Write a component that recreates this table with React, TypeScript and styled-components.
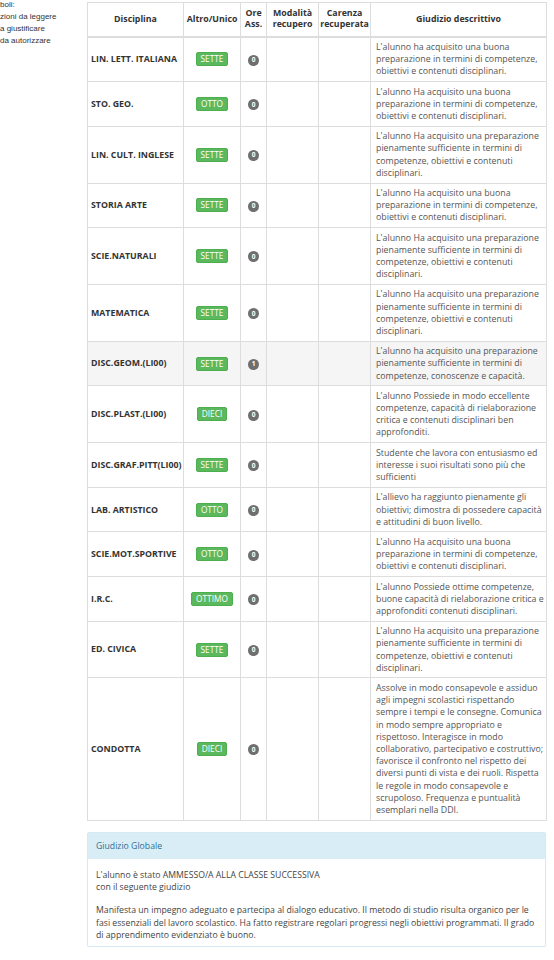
import styled, { createGlobalStyle } from 'styled-components'

interface RowProps {
    hovered?: boolean;
}

interface ColProps {
    w: number;
}

interface Voto {
    materia: string;
    voto: string;
    assenze: number;
    giudizio: string;
    hovered?: boolean;
}

const GlobalStyle = createGlobalStyle`
    *, *::before, *::after {
        box-sizing: border-box;
    }
    html, body {
        margin: 0;
        padding: 0;
        background: #fff;
    }
    body {
        font-family: "Open Sans", "DejaVu Sans", sans-serif;
        color: #333;
    }
`;

const Page = styled.div`
    display: flex;
    flex-direction: row;
    align-items: flex-start;
    width: 554px;
    padding-top: 2px;
`;

const Sidebar = styled.div`
    width: 87px;
    flex-shrink: 0;
    margin-top: -3px;
    font-family: "Liberation Sans", Arial, sans-serif;
    font-size: 8px;
    line-height: 12px;
    color: #333;
    white-space: nowrap;
    overflow: hidden;
`;

const Main = styled.div`
    width: 460px;
    display: flex;
    flex-direction: column;
    gap: 11px;
`;

const Table = styled.table`
    width: 459px;
    border-collapse: collapse;
    table-layout: fixed;
    border: 1px solid #ddd;
    font-size: 8.8px;
    line-height: 12.2px;
`;

const HeadCell = styled.th<ColProps>`
    width: ${props => props.w}px;
    padding: 3px 0;
    height: 34px;
    font-weight: 700;
    color: #333;
    text-align: center;
    vertical-align: middle;
    border: 1px solid #ddd;
    border-bottom: 2px solid #ddd;
    line-height: 11.5px;
`;

const Row = styled.tr<RowProps>`
    background: ${props => props.hovered ? '#f5f5f5' : '#fff'};
`;

const Cell = styled.td`
    border: 1px solid #ddd;
    padding: 3.5px 4px;
    vertical-align: middle;
`;

const SubjectCell = styled(Cell)`
    font-weight: 700;
    color: #333;
    white-space: nowrap;
    padding-left: 3px;
`;

const CenterCell = styled(Cell)`
    text-align: center;
    padding: 3px 0;
`;

const TextCell = styled(Cell)`
    color: #555;
    padding: 3.5px 2px 3.5px 5px;
`;

const Grade = styled.span`
    display: inline-block;
    background: #5cb85c;
    border: 1px solid #4cae4c;
    border-radius: 2px;
    color: #fff;
    font-size: 8.3px;
    line-height: 12px;
    padding: 0 4px;
    text-transform: uppercase;
`;

const Hours = styled.span`
    display: inline-flex;
    align-items: center;
    justify-content: center;
    width: 11px;
    height: 11px;
    border-radius: 50%;
    background: #6f6f6f;
    color: #fff;
    font-size: 6.5px;
    font-weight: 700;
`;

const Panel = styled.div`
    width: 459px;
    border: 1px solid #d5e9f3;
    border-radius: 2px;
    box-shadow: 0 1px 1px rgba(0, 0, 0, 0.05);
    font-size: 8.7px;
    line-height: 12.3px;
`;

const PanelHeading = styled.div`
    background: #d9edf7;
    color: #31708f;
    padding: 7px 8px;
    height: 26px;
`;

const PanelBody = styled.div`
    padding: 10px 6px 5px 8px;
    color: #444;

    & p {
        margin: 0 0 11px;
    }
    & p:last-child {
        margin: 0;
    }
`;

const voti: Voto[] = [
    { materia: 'LIN. LETT. ITALIANA', voto: 'Sette', assenze: 0, giudizio: "L'alunno ha acquisito una buona preparazione in termini di competenze, obiettivi e contenuti disciplinari." },
    { materia: 'STO. GEO.', voto: 'Otto', assenze: 0, giudizio: "L'alunno Ha acquisito una buona preparazione in termini di competenze, obiettivi e contenuti disciplinari." },
    { materia: 'LIN. CULT. INGLESE', voto: 'Sette', assenze: 0, giudizio: "L'alunno Ha acquisito una preparazione pienamente sufficiente in termini di competenze, obiettivi e contenuti disciplinari." },
    { materia: 'STORIA ARTE', voto: 'Sette', assenze: 0, giudizio: "L'alunno Ha acquisito una buona preparazione in termini di competenze, obiettivi e contenuti disciplinari." },
    { materia: 'SCIE.NATURALI', voto: 'Sette', assenze: 0, giudizio: "L'alunno Ha acquisito una preparazione pienamente sufficiente in termini di competenze, obiettivi e contenuti disciplinari." },
    { materia: 'MATEMATICA', voto: 'Sette', assenze: 0, giudizio: "L'alunno Ha acquisito una preparazione pienamente sufficiente in termini di competenze, obiettivi e contenuti disciplinari." },
    { materia: 'DISC.GEOM.(LI00)', voto: 'Sette', assenze: 1, hovered: true, giudizio: "L'alunno ha acquisito una preparazione pienamente sufficiente in termini di competenze, conoscenze e capacità." },
    { materia: 'DISC.PLAST.(LI00)', voto: 'Dieci', assenze: 0, giudizio: "L'alunno Possiede in modo eccellente competenze, capacità di rielaborazione critica e contenuti disciplinari ben approfonditi." },
    { materia: 'DISC.GRAF.PITT(LI00)', voto: 'Sette', assenze: 0, giudizio: 'Studente che lavora con entusiasmo ed interesse i suoi risultati sono più che sufficienti' },
    { materia: 'LAB. ARTISTICO', voto: 'Otto', assenze: 0, giudizio: "L'allievo ha raggiunto pienamente gli obiettivi; dimostra di possedere capacità e attitudini di buon livello." },
    { materia: 'SCIE.MOT.SPORTIVE', voto: 'Otto', assenze: 0, giudizio: "L'alunno Ha acquisito una buona preparazione in termini di competenze, obiettivi e contenuti disciplinari." },
    { materia: 'I.R.C.', voto: 'Ottimo', assenze: 0, giudizio: "L'alunno Possiede ottime competenze, buone capacità di rielaborazione critica e approfonditi contenuti disciplinari." },
    { materia: 'ED. CIVICA', voto: 'Sette', assenze: 0, giudizio: "L'alunno Ha acquisito una preparazione pienamente sufficiente in termini di competenze, obiettivi e contenuti disciplinari." },
    { materia: 'CONDOTTA', voto: 'Dieci', assenze: 0, giudizio: 'Assolve in modo consapevole e assiduo agli impegni scolastici rispettando sempre i tempi e le consegne. Comunica in modo sempre appropriato e rispettoso. Interagisce in modo collaborativo, partecipativo e costruttivo; favorisce il confronto nel rispetto dei diversi punti di vista e dei ruoli. Rispetta le regole in modo consapevole e scrupoloso. Frequenza e puntualità esemplari nella DDI.' },
];

export default function App() {
    return (
        <>
            <GlobalStyle />
            <Page>
                <Sidebar>
                    <div>boli:</div>
                    <div>zioni da leggere</div>
                    <div>a giustificare</div>
                    <div>da autorizzare</div>
                </Sidebar>
                <Main>
                    <Table>
                        <thead>
                            <tr>
                                <HeadCell w={96}>Disciplina</HeadCell>
                                <HeadCell w={57}>Altro/Unico</HeadCell>
                                <HeadCell w={26}>Ore<br />Ass.</HeadCell>
                                <HeadCell w={52}>Modalità<br />recupero</HeadCell>
                                <HeadCell w={52}>Carenza<br />recuperata</HeadCell>
                                <HeadCell w={176}>Giudizio descrittivo</HeadCell>
                            </tr>
                        </thead>
                        <tbody>
                            {voti.map(v => (
                                <Row key={v.materia} hovered={v.hovered}>
                                    <SubjectCell>{v.materia}</SubjectCell>
                                    <CenterCell><Grade>{v.voto}</Grade></CenterCell>
                                    <CenterCell><Hours>{v.assenze}</Hours></CenterCell>
                                    <Cell />
                                    <Cell />
                                    <TextCell>{v.giudizio}</TextCell>
                                </Row>
                            ))}
                        </tbody>
                    </Table>
                    <Panel>
                        <PanelHeading>Giudizio Globale</PanelHeading>
                        <PanelBody>
                            <p>L'alunno è stato AMMESSO/A ALLA CLASSE SUCCESSIVA<br />con il seguente giudizio</p>
                            <p>Manifesta un impegno adeguato e partecipa al dialogo educativo. Il metodo di studio risulta organico per le fasi essenziali del lavoro scolastico. Ha fatto registrare regolari progressi negli obiettivi programmati. Il grado di apprendimento evidenziato è buono.</p>
                        </PanelBody>
                    </Panel>
                </Main>
            </Page>
        </>
    )
}
